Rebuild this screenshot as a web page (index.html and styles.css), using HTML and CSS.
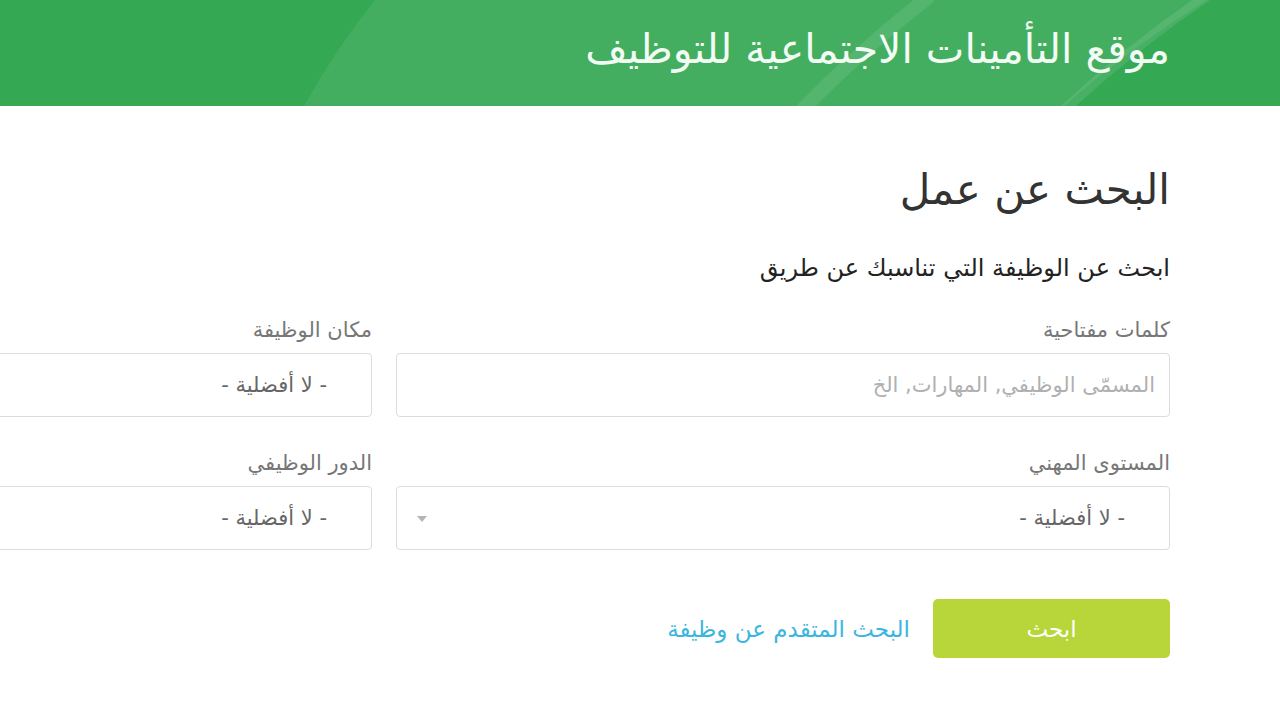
FILE: index.html
```html
<!DOCTYPE html>
<html lang="ar" dir="rtl">
    <head>
        <meta charset="utf-8">
        <link rel="stylesheet" href="styles.css">
    </head>
    <body>
        <header class="topbar">
            <svg class="topbar_art" width="1280" height="106" viewBox="0 0 1280 106">
                <path d="M375 0 Q335 50 304 106 L1064 106 Q1130 48 1207 0 Z" fill="#ffffff" fill-opacity="0.08"/>
                <path d="M930 -4 Q860 50 800 112" stroke="#ffffff" stroke-opacity="0.09" stroke-width="14" fill="none"/>
                <path d="M1207 -4 Q1130 48 1062 112" stroke="#ffffff" stroke-opacity="0.1" stroke-width="10" fill="none"/>
            </svg>
            <div class="topbar_inner">
                <h1 class="site_title">موقع التأمينات الاجتماعية للتوظيف</h1>
            </div>
        </header>

        <main class="search">
            <h2 class="search_title">البحث عن عمل</h2>
            <p class="search_lead">ابحث عن الوظيفة التي تناسبك عن طريق</p>

            <form class="search_form">
                <div class="field_grid">
                    <div class="field">
                        <label class="field_label">كلمات مفتاحية</label>
                        <input class="field_box" type="text" placeholder="المسمّى الوظيفي, المهارات, الخ">
                    </div>
                    <div class="field">
                        <label class="field_label">مكان الوظيفة</label>
                        <div class="field_box select">- لا أفضلية -<span class="select_arrow"></span></div>
                    </div>
                    <div class="field">
                        <label class="field_label">المستوى المهني</label>
                        <div class="field_box select">- لا أفضلية -<span class="select_arrow"></span></div>
                    </div>
                    <div class="field">
                        <label class="field_label">الدور الوظيفي</label>
                        <div class="field_box select">- لا أفضلية -<span class="select_arrow"></span></div>
                    </div>
                </div>

                <div class="actions">
                    <button class="search_btn" type="button">ابحث</button>
                    <a class="advanced_link" href="#">البحث المتقدم عن وظيفة</a>
                </div>
            </form>
        </main>
    </body>
</html>
```

FILE: styles.css
```css
/* job search page, rtl */
html, body {
    margin: 0;
    overflow: hidden;
}

body {
    font-family: "DejaVu Sans", "Noto Sans", sans-serif;
    background: #ffffff;
    color: #333333;
    direction: rtl;
}

/* green bar on top */
.topbar {
    position: relative;
    height: 106px;
    background: #34a853;
    overflow: hidden;
}

.topbar_art {
    position: absolute;
    left: 0;
    top: 0;
}

.topbar_inner {
    position: relative;
    height: 100%;
    display: flex;
    align-items: center;
    padding-right: 110px;
    padding-bottom: 8px;
    box-sizing: border-box;
}

.site_title {
    margin: 0;
    font-size: 41px;
    line-height: 50px;
    font-weight: normal;
    color: #f2fbf4;
}

/* main block, wider than the window on the left */
.search {
    width: 1572px;
    margin-right: 110px;
    padding-top: 60px;
}

.search_title {
    margin: 0;
    font-size: 42px;
    font-weight: normal;
    line-height: 48px;
    color: #333333;
}

.search_lead {
    margin: 39px 0 0 0;
    font-size: 24px;
    line-height: 30px;
    color: #222222;
}

.field_grid {
    display: grid;
    grid-template-columns: 774px 774px;
    column-gap: 24px;
    row-gap: 32px;
    margin-top: 33px;
}

.field {
    display: flex;
    flex-direction: column;
}

.field_label {
    font-size: 21px;
    line-height: 28px;
    color: #777777;
    margin-bottom: 9px;
}

.field_box {
    box-sizing: border-box;
    height: 64px;
    border: 1px solid #dcdcdc;
    border-radius: 4px;
    background: #ffffff;
    font-family: "DejaVu Sans", "Noto Sans", sans-serif;
    font-size: 21px;
    color: #666666;
    padding: 0 14px;
    outline: none;
}

.field_box::placeholder {
    color: #b0b0b0;
}

.select {
    display: flex;
    align-items: center;
    padding-right: 44px;
    position: relative;
}

.select_arrow {
    position: absolute;
    left: 20px;
    top: 29px;
    width: 0;
    height: 0;
    border-left: 5px solid transparent;
    border-right: 5px solid transparent;
    border-top: 6px solid #b5b5b5;
}

.actions {
    display: flex;
    align-items: center;
    gap: 23px;
    margin-top: 49px;
}

.search_btn {
    width: 237px;
    height: 59px;
    border: none;
    border-radius: 5px;
    background: #b8d639;
    color: #ffffff;
    font-family: "DejaVu Sans", "Noto Sans", sans-serif;
    font-size: 23px;
    cursor: pointer;
}

.advanced_link {
    font-size: 23px;
    color: #3cb6df;
    text-decoration: none;
}
```
